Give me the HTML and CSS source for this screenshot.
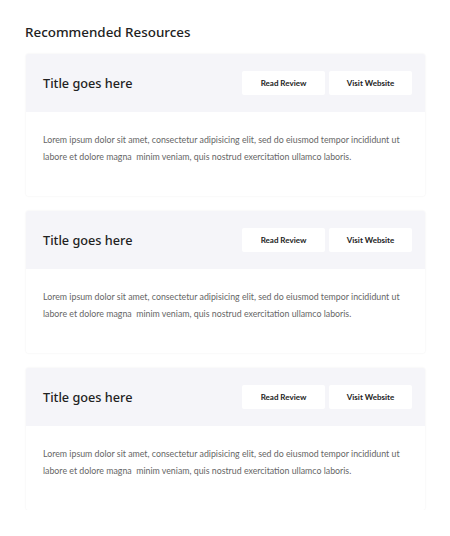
FILE: index.html
```html
<!DOCTYPE html>
<html>
<head>
<meta charset="utf-8">
<link rel="stylesheet" href="styles.css">
</head>
<body>
<div class="page">
  <h2 class="heading">Recommended Resources</h2>
  <div class="list">
    <div class="card">
      <div class="card-head">
        <h3 class="title">Title goes here</h3>
        <div class="actions">
          <a class="btn">Read Review</a>
          <a class="btn">Visit Website</a>
        </div>
      </div>
      <div class="card-body">
        <p class="text">Lorem ipsum dolor sit amet, consectetur adipisicing elit, sed do eiusmod tempor incididunt ut labore et dolore magna&nbsp; minim veniam, quis nostrud exercitation ullamco laboris.</p>
      </div>
    </div>
    <div class="card">
      <div class="card-head">
        <h3 class="title">Title goes here</h3>
        <div class="actions">
          <a class="btn">Read Review</a>
          <a class="btn">Visit Website</a>
        </div>
      </div>
      <div class="card-body">
        <p class="text">Lorem ipsum dolor sit amet, consectetur adipisicing elit, sed do eiusmod tempor incididunt ut labore et dolore magna&nbsp; minim veniam, quis nostrud exercitation ullamco laboris.</p>
      </div>
    </div>
    <div class="card">
      <div class="card-head">
        <h3 class="title">Title goes here</h3>
        <div class="actions">
          <a class="btn">Read Review</a>
          <a class="btn">Visit Website</a>
        </div>
      </div>
      <div class="card-body">
        <p class="text">Lorem ipsum dolor sit amet, consectetur adipisicing elit, sed do eiusmod tempor incididunt ut labore et dolore magna&nbsp; minim veniam, quis nostrud exercitation ullamco laboris.</p>
      </div>
    </div>
  </div>
</div>
</body>
</html>
```
FILE: styles.css
```css
html, body {
  margin: 0;
  padding: 0;
  background: #ffffff;
}
.page {
  padding: 22px 25px 0 25px;
  width: 400px;
}
.heading {
  margin: 0 0 12px 0;
  font-family: "Noto Sans", sans-serif;
  font-weight: 500;
  font-size: 13.4px;
  line-height: 20px;
  color: #222222;
}
.list {
  display: flex;
  flex-direction: column;
  gap: 15px;
  padding-left: 1px;
}
.card {
  width: 399px;
  background: #ffffff;
  border-radius: 2px;
  box-shadow: 0 0 2px rgba(0, 0, 0, 0.08);
  overflow: hidden;
}
.card-head {
  height: 58px;
  background: #f5f5f9;
  display: flex;
  align-items: center;
  justify-content: space-between;
  padding: 0 13px 0 17px;
}
.title {
  margin: 0;
  font-family: "Noto Sans", sans-serif;
  font-weight: 500;
  font-size: 12.7px;
  color: #222222;
}
.actions {
  display: flex;
  gap: 4px;
}
.btn {
  width: 83px;
  height: 24px;
  background: #ffffff;
  border-radius: 2px;
  display: flex;
  align-items: center;
  justify-content: center;
  font-family: "Lato", sans-serif;
  font-weight: 700;
  font-size: 8px;
  color: #222222;
}
.card-body {
  height: 84px;
  box-sizing: border-box;
  padding: 20px 17px 0 17px;
}
.text {
  margin: 0;
  font-family: "Lato", sans-serif;
  font-size: 8.8px;
  line-height: 16.5px;
  color: #666666;
}
```
